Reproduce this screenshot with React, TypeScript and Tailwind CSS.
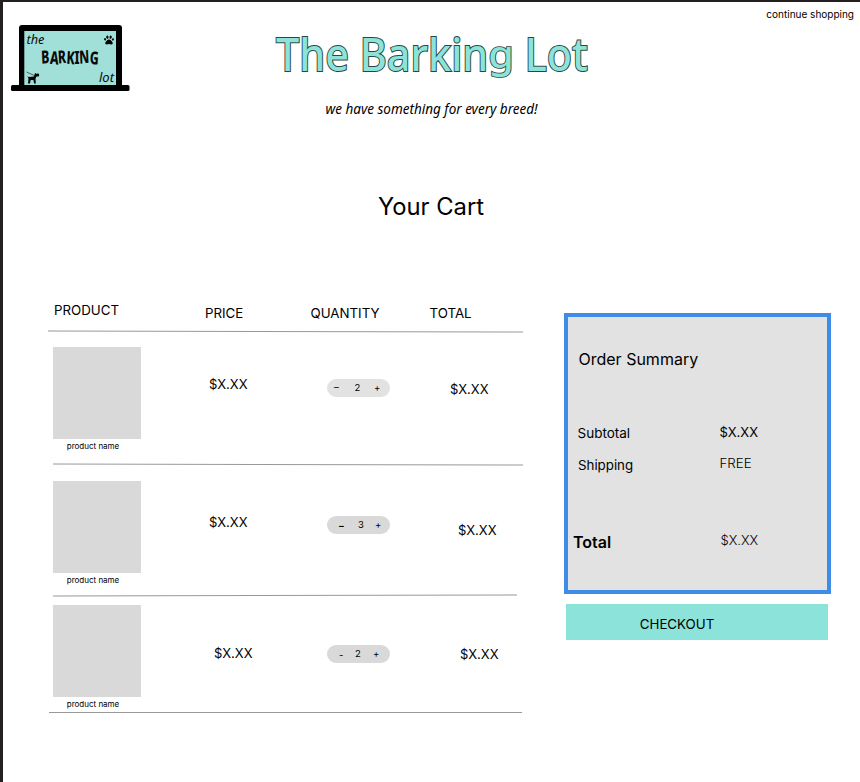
import React from "react";
import { FaPaw } from "react-icons/fa";

type Item = {
  row: string;
  price: string;
  pill: string;
  minus: string;
  minusChar: string;
  qty: number;
  count: string;
  total: string;
  rule: string;
};

const items: Item[] = [
  {
    row: "h-[133px] pt-[15.5px]",
    price: "mt-[27px] ml-1",
    pill: "mt-8 bg-[#e2e2e2]",
    minus: "ml-[7px] w-[20.5px] -mt-[2px]",
    minusChar: "–",
    qty: 2,
    count: "w-[19.5px]",
    total: "mt-8 ml-5",
    rule: "ml-[5px] w-[470px] rotate-[0.12deg]",
  },
  {
    row: "h-[131.5px] pt-[16.5px]",
    price: "mt-[31px] ml-1",
    pill: "mt-[35px] bg-[#d9d9d9]",
    minus: "ml-[12px] w-[19px] font-bold mt-[2px]",
    minusChar: "–",
    qty: 3,
    count: "w-[17px]",
    total: "mt-[38.5px] ml-7",
    rule: "ml-[5px] w-[464px] -rotate-[0.12deg]",
  },
  {
    row: "h-[117px] pt-[9px]",
    price: "mt-[37.5px] ml-[9px]",
    pill: "mt-10 bg-[#d9d9d9]",
    minus: "ml-[12px] w-[16px] mt-px",
    minusChar: "-",
    qty: 2,
    count: "w-[18px]",
    total: "mt-[38.5px] ml-[30px]",
    rule: "ml-px w-[473px]",
  },
];

function Logo() {
  return (
    <svg className="block h-[66px] w-[119px]" viewBox="0 0 119 66">
      <rect x="8" width="103" height="64" rx="3" fill="#000" />
      <rect x="0" y="60" width="118.500" height="6" rx="1.500" fill="#000" />
      <rect x="13.300" y="6" width="91.700" height="54" fill="#a0e0d8" />
      <g fontFamily="'Noto Sans', sans-serif" fill="#0a0a0a">
        <text x="15.500" y="19" fontSize="12.500" fontStyle="italic" textLength="18" lengthAdjust="spacingAndGlyphs">the</text>
        <text x="88" y="56.700" fontSize="12.500" fontStyle="italic" textLength="15" lengthAdjust="spacingAndGlyphs">lot</text>
        <text x="30.500" y="38.800" fontSize="18" fontWeight="800" textLength="57" lengthAdjust="spacingAndGlyphs" rotate="-4 5 -5 4 0 -4 5">BARKING</text>
      </g>
      <path d="M15.500 47 24.500 51" stroke="#111" strokeWidth=".6" />
      <path d="M16.300 50.700 17.500 52 23 51.500 24 48l1.300.8 2.200-.2.600.9v1.700l-2.900.5-.7 2.300.3 4.500h-1.700l-.7-3.500h-2.700l-.7 3.500h-2l.5-5z" fill="#000" />
    </svg>
  );
}

export default function App() {
  return (
    <div className="h-[782px] w-[860px] overflow-hidden border-t-[2px] border-l-[3px] border-[#231f20] bg-white font-['Inter',sans-serif] text-[13.3px] leading-5 text-black">
      <header className="flex h-[148px] items-start">
        <div className="relative mt-[23px] ml-2 w-[119px] shrink-0">
          <Logo />
          <FaPaw className="absolute top-[10px] left-[93px] size-[10px]" />
        </div>
        <div className="mt-[19px] ml-[133px] w-[337px] shrink-0 text-center font-['Noto_Sans',sans-serif]">
          <h1 className="-mr-[41px] -ml-10 scale-x-[0.93] text-[44.5px] leading-[66px] font-medium whitespace-nowrap text-[#8be3d9] [-webkit-text-stroke:2px_#2f4442] [paint-order:stroke_fill]">
            The Barkin<span className="inline-block origin-[50%_26px] scale-y-[0.86]">g</span> Lot
          </h1>
          <p className="mt-[12px] text-[13.5px] leading-5 italic">we have something for every breed!</p>
        </div>
        <a className="mt-1 mr-[6px] ml-auto text-[10px] leading-4 whitespace-nowrap">continue shopping</a>
      </header>

      <h2 className="mt-[41px] pr-[1px] text-center text-[23.8px] leading-8">Your Cart</h2>

      <main className="mt-[77px] flex items-start">
        <section className="ml-[45px] w-[475px]">
          <div className="grid h-[30.5px] grid-cols-[157px_105px_120px_93px]">
            <span className="ml-[6px]">PRODUCT</span>
            <span className="mt-[3px]">PRICE</span>
            <span className="mt-[3px] ml-[0.5px]">QUANTITY</span>
            <span className="mt-[3px] -ml-[0.5px]">TOTAL</span>
          </div>
          <div className="h-px w-[475px] rotate-[0.12deg] bg-[#999]" />
          {items.map((item, i) => (
            <React.Fragment key={i}>
              <div className={`-mb-px grid grid-cols-[157px_105px_120px_93px] items-start text-[13px] ${item.row}`}>
                <div className="ml-[5px] w-[88px]">
                  <div className="h-[92px] bg-[#d9d9d9]" />
                  <p className="mt-px pr-2 text-center text-[8px] leading-3">product name</p>
                </div>
                <span className={item.price}>$X.XX</span>
                <div className={`ml-[17px] flex h-[18px] w-[63px] items-center rounded-full text-[9.5px] leading-[18px] ${item.pill}`}>
                  <span className={item.minus}>{item.minusChar}</span>
                  <span className={item.count}>{item.qty}</span>
                  <span>+</span>
                </div>
                <span className={item.total}>$X.XX</span>
              </div>
              <div className={`h-px bg-[#999] ${item.rule}`} />
            </React.Fragment>
          ))}
        </section>

        <aside className="mt-[13px] ml-[40.5px] w-[267px]">
          <div className="h-[281px] border-[4.5px] border-[#3f8ce6] bg-[#e2e2e2]">
            <h3 className="mt-[30px] ml-[11px] text-base leading-6">Order Summary</h3>
            <dl className="mt-[51px] grid grid-cols-[152px_1fr]">
              <dt className="mt-px ml-[10px] h-[31px] text-[13.5px]">Subtotal</dt>
              <dd className="text-[13px]">$X.XX</dd>
              <dt className="mt-px ml-[10.5px]">Shipping</dt>
              <dd className="-mt-px font-light">FREE</dd>
              <dt className="mt-[55px] ml-[5.5px] text-base leading-6 font-semibold">Total</dt>
              <dd className="mt-[55px] ml-px text-[13px] font-light">$X.XX</dd>
            </dl>
          </div>
          <button className="mt-[10px] ml-[2px] block h-9 w-[262px] bg-[#8be3d9] pt-[3px] pr-[39px] text-center leading-5">CHECKOUT</button>
        </aside>
      </main>
    </div>
  );
}
